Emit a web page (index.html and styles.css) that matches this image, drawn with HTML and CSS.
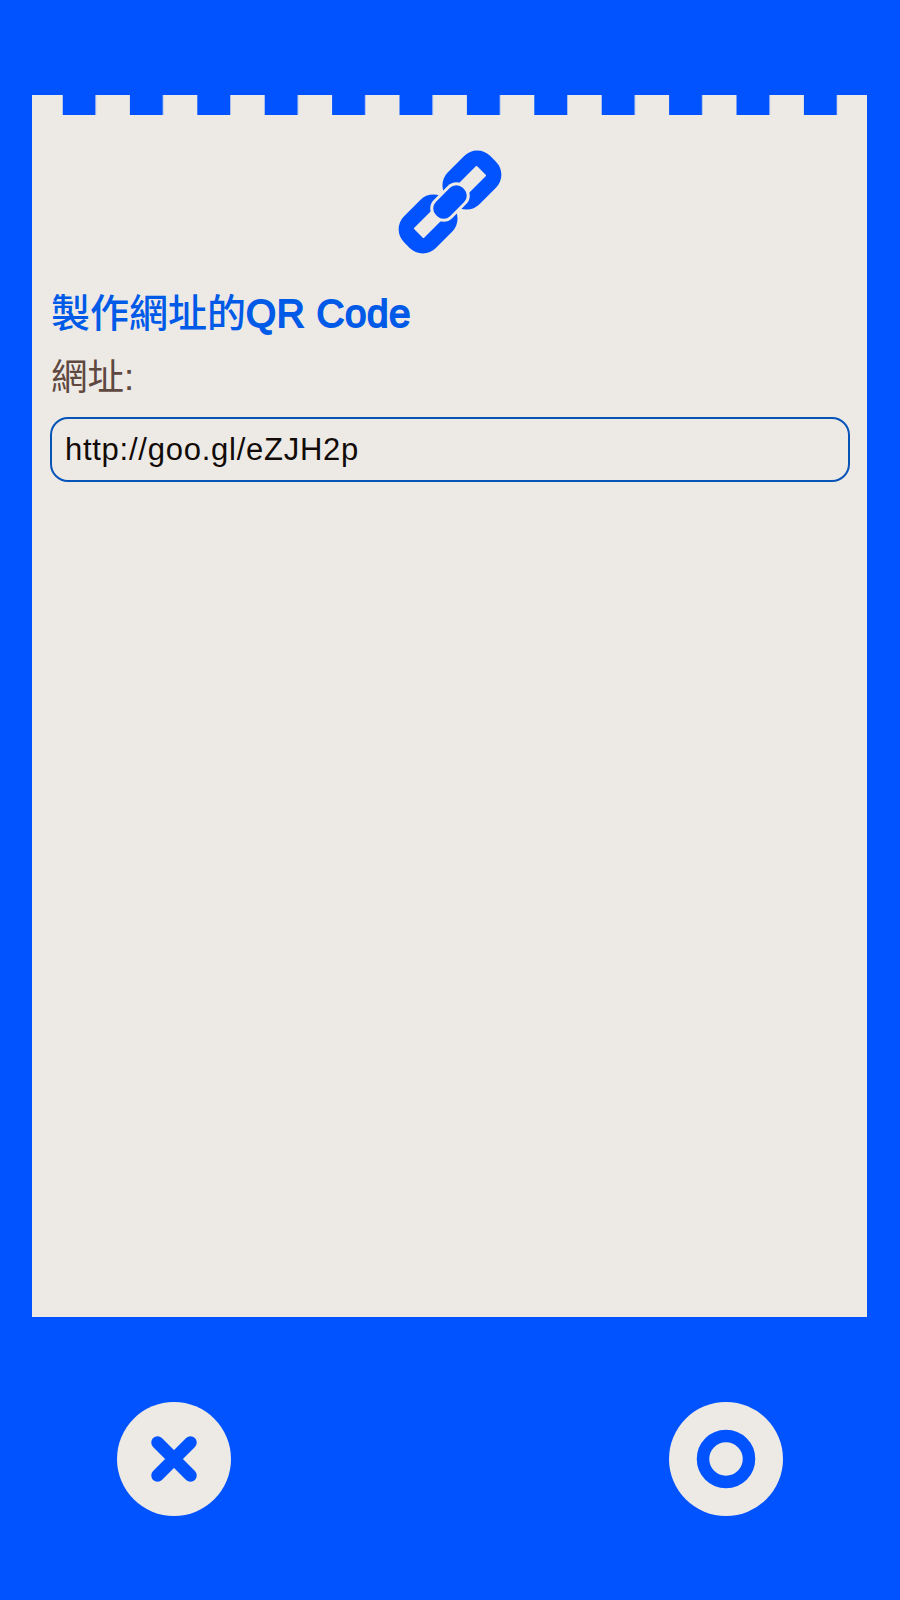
FILE: index.html
```html
<!DOCTYPE html>
<html lang="zh-Hant">
<head>
<meta charset="utf-8">
<title>製作網址的QR Code</title>
<link rel="stylesheet" href="styles.css">
</head>
<body>
<main class="screen">
  <section class="sheet">
    <svg class="edge" viewBox="0 0 835 20" preserveAspectRatio="none" aria-hidden="true">
      <defs>
        <pattern id="notch" x="30.5" y="0" width="67.4" height="20" patternUnits="userSpaceOnUse">
          <rect class="blue" width="33" height="20"/>
        </pattern>
      </defs>
      <rect x="30.5" width="775" height="20" fill="url(#notch)"/>
    </svg>
    <svg class="link-icon" viewBox="-55 -55 110 110" aria-hidden="true">
      <g transform="rotate(-45)">
        <rect class="blue" x="1" y="-22.5" width="60" height="45" rx="18.5"/>
        <rect class="blue" x="-61" y="-22.5" width="60" height="45" rx="18.5"/>
        <rect class="pale" x="-44.5" y="-7" width="89" height="14" rx="1"/>
        <rect class="pale" x="-22" y="-13" width="44" height="26" rx="12"/>
        <rect class="blue" x="-19" y="-10" width="38" height="20" rx="9"/>
      </g>
    </svg>
    <h1 class="title">製作網址的<span class="latin">QR Code</span></h1>
    <label class="label" for="url">網址:</label>
    <input class="field" id="url" type="text" value="http://goo.gl/eZJH2p">
  </section>
  <nav class="actions">
    <button class="round" aria-label="取消">
      <svg viewBox="-57 -57 114 114"><path class="mark" d="M-16.5-16.5 16.5 16.5M16.5-16.5-16.5 16.5"/></svg>
    </button>
    <button class="round" aria-label="確定">
      <svg viewBox="-57 -57 114 114"><circle class="mark" r="23"/></svg>
    </button>
  </nav>
</main>
</body>
</html>
```
FILE: styles.css
```css
* { box-sizing: border-box; }
body { margin: 0; background: #0053ff; }
.screen {
  height: 1600px;
  padding: 95.4px 32.6px 0 32.4px;
  display: flex;
  flex-direction: column;
  background: #0053ff;
  font-family: "Liberation Sans", "Noto Sans CJK TC", sans-serif;
}
.sheet {
  height: 1222px;
  background: #edeae6;
  display: flex;
  flex-direction: column;
  align-items: flex-start;
  padding: 0 17.5px;
}
.edge { display: block; width: 835px; height: 20px; margin: 0 -17.5px; flex: none; }
.link-icon { width: 110px; height: 110px; margin-top: 32px; align-self: center; flex: none; }
.blue { fill: #0053ff; }
.pale { fill: #edeae6; }
.title {
  margin: 27px 0 0 1.2px;
  font-size: 39px;
  line-height: 60px;
  font-weight: 500;
  color: #005ae8;
  white-space: nowrap;
}
.latin { font-weight: 400; font-size: 38.6px; letter-spacing: .6px; -webkit-text-stroke: 1.8px #005ae8; }
.label {
  margin: 6px 0 0 1.2px;
  font-size: 36.5px;
  line-height: 56px;
  font-weight: 400;
  color: #5e483f;
}
.field {
  width: 800px;
  height: 65px;
  margin-top: 11px;
  padding: 0 13px;
  border: 2px solid #0754b8;
  border-radius: 18px;
  background: transparent;
  font: 31px "Liberation Sans", sans-serif;
  letter-spacing: .75px;
  color: #120b08;
}
.actions {
  display: flex;
  justify-content: space-between;
  padding: 85px 84.5px 0;
}
.round {
  width: 114px;
  height: 114px;
  padding: 0;
  border: 0;
  border-radius: 50%;
  background: #edeae6;
}
.round svg { display: block; width: 114px; height: 114px; }
.mark { fill: none; stroke: #0053ff; stroke-width: 12.5; stroke-linecap: round; }
```
